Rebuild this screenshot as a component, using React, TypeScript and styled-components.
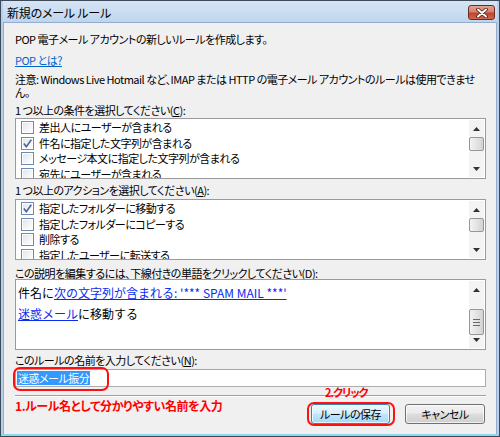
import React from "react";
import styled, { createGlobalStyle } from "styled-components";

const GlobalStyle = createGlobalStyle`
  html, body {
    margin: 0;
    padding: 0;
    background: #ffffff;
  }
  body {
    font-family: "Noto Sans CJK JP", "Noto Sans", sans-serif;
    font-size: 11px;
    letter-spacing: -0.5px;
    color: #000;
    font-feature-settings: "palt";
  }
`;

const conditions = [
  { label: "差出人にユーザーが含まれる", checked: false },
  { label: "件名に指定した文字列が含まれる", checked: true },
  { label: "メッセージ本文に指定した文字列が含まれる", checked: false },
  { label: "宛先にユーザーが含まれる", checked: false },
];

const actions = [
  { label: "指定したフォルダーに移動する", checked: true },
  { label: "指定したフォルダーにコピーする", checked: false },
  { label: "削除する", checked: false },
  { label: "指定したユーザーに転送する", checked: false },
];

function CheckBox({ checked }: { checked: boolean }) {
  return (
    <Box>
      {checked && (
        <svg width="11" height="11" viewBox="0 0 11 11">
          <path d="M1.8 5.6 L4.3 8.6 L9.3 1.8" fill="none" stroke="#4a6496" strokeWidth="1.6" />
        </svg>
      )}
    </Box>
  );
}

function ScrollBar({ thumbTop, thumbHeight, grip }: { thumbTop: number; thumbHeight: number; grip?: boolean }) {
  return (
    <Bar>
      <Arrow>
        <svg width="7" height="4" viewBox="0 0 7 4">
          <path d="M0 4 L3.5 0 L7 4 Z" fill="#333" />
        </svg>
      </Arrow>
      <Track>
        <Thumb $top={thumbTop} $height={thumbHeight}>
          {grip && (
            <svg width="7" height="7" viewBox="0 0 7 7">
              <path d="M0 0.5 H7 M0 3.5 H7 M0 6.5 H7" stroke="#6a6a6a" strokeWidth="1" />
            </svg>
          )}
        </Thumb>
      </Track>
      <Arrow>
        <svg width="7" height="4" viewBox="0 0 7 4">
          <path d="M0 0 L7 0 L3.5 4 Z" fill="#333" />
        </svg>
      </Arrow>
    </Bar>
  );
}

function CheckList({ items, gap }: { items: { label: string; checked: boolean }[]; gap: number }) {
  return (
    <ListBox $gap={gap}>
      <ListItems>
        {items.map((item, i) => (
          <Row key={i}>
            <CheckBox checked={item.checked} />
            <span>{item.label}</span>
          </Row>
        ))}
      </ListItems>
      <ScrollBar thumbTop={0} thumbHeight={14} />
    </ListBox>
  );
}

export default function App() {
  return (
    <>
      <GlobalStyle />
      <Window>
        <TitleBar>
          <Title>新規のメール ルール</Title>
          <CloseButton>
            <svg width="12" height="10" viewBox="0 0 12 10">
              <path d="M2 1.5 L10 8.5 M10 1.5 L2 8.5" stroke="#4a1a12" strokeWidth="3.6" strokeLinecap="round" />
              <path d="M2 1.5 L10 8.5 M10 1.5 L2 8.5" stroke="#ffffff" strokeWidth="2" strokeLinecap="round" />
            </svg>
          </CloseButton>
        </TitleBar>
        <Body>
          <Line>POP 電子メール アカウントの新しいルールを作成します。</Line>
          <HelpLink>POP とは?</HelpLink>
          <Note>
            注意: Windows Live Hotmail など、IMAP または HTTP の電子メール アカウントのルールは使用できませ
            <br />
            ん。
          </Note>
          <Label $gap={5}>
            1 つ以上の条件を選択してください(<u>C</u>):
          </Label>
          <CheckList items={conditions} gap={2} />
          <Label $gap={5}>
            1 つ以上のアクションを選択してください(<u>A</u>):
          </Label>
          <CheckList items={actions} gap={3} />
          <Label $gap={7}>
            この説明を編集するには、下線付きの単語をクリックしてください(<u>D</u>):
          </Label>
          <DescBox>
            <DescText>
              <DescLine>
                件名に<DescLink>次の文字列が含まれる: '*** SPAM MAIL ***'</DescLink>
              </DescLine>
              <DescLine>
                <DescLink>迷惑メール</DescLink>に移動する
              </DescLine>
            </DescText>
            <ScrollBar thumbTop={11} thumbHeight={26} grip />
          </DescBox>
          <Label $gap={4}>
            このルールの名前を入力してください(<u>N</u>):
          </Label>
          <NameField>
            <Selected>迷惑メール振分</Selected>
            <RedRing />
          </NameField>
          <Separator />
          <Footer>
            <Hint>1.ルール名として分かりやすい名前を入力</Hint>
            <Buttons>
              <ButtonWrap>
                <ClickHint>2.クリック</ClickHint>
                <Button $primary>ルールの保存</Button>
                <ButtonRing />
              </ButtonWrap>
              <Button>キャンセル</Button>
            </Buttons>
          </Footer>
        </Body>
      </Window>
    </>
  );
}

const Window = styled.div`
  width: 500px;
  height: 437px;
  box-sizing: border-box;
  display: flex;
  flex-direction: column;
  border: 1px solid #3c4a5a;
  background: #b8d0ea;
  padding: 0 2px 2px 2px;
  box-shadow: inset 0 -2px 0 #8fd6ee;
`;

const TitleBar = styled.div`
  height: 21px;
  display: flex;
  align-items: center;
  justify-content: space-between;
  padding: 0 2px 0 4px;
  background: linear-gradient(#d6e5f5, #bfd5ed);
`;

const Title = styled.div`
  font-size: 12px;
  letter-spacing: -0.2px;
  color: #000;
  line-height: 14px;
  padding-top: 2px;
`;

const CloseButton = styled.div`
  width: 27px;
  height: 15px;
  margin-top: 2px;
  box-sizing: border-box;
  display: flex;
  align-items: center;
  justify-content: center;
  border: 1px solid #6b2a22;
  border-radius: 3px;
  background: linear-gradient(#e6a393 0%, #d4806d 45%, #c2432c 55%, #d2664c 100%);
`;

const Body = styled.div`
  flex: 1;
  display: flex;
  flex-direction: column;
  background: #f0f0f0;
  border: 1px solid #94aed0;
  border-bottom: none;
  padding: 8px 10px 0 11px;
  overflow: hidden;
`;

const Line = styled.div`
  height: 16px;
  line-height: 16px;
  white-space: nowrap;
`;

const HelpLink = styled.a`
  align-self: flex-start;
  margin-top: 5px;
  height: 16px;
  line-height: 16px;
  color: #0066cc;
  text-decoration: underline;
`;

const Note = styled.div`
  margin-top: 5px;
  line-height: 13px;
  white-space: nowrap;
`;

const Label = styled.div<{ $gap: number }>`
  margin-top: ${(p) => p.$gap}px;
  height: 12px;
  line-height: 12px;
  white-space: nowrap;

  u {
    text-underline-offset: 1px;
  }
`;

const ListBox = styled.div<{ $gap: number }>`
  margin-top: ${(p) => p.$gap}px;
  height: 61px;
  flex-shrink: 0;
  box-sizing: border-box;
  display: flex;
  border: 1px solid #9a9a9a;
  background: #fff;
  overflow: hidden;
`;

const ListItems = styled.div`
  flex: 1;
  padding-top: 1px;
`;

const Row = styled.div`
  height: 15.5px;
  display: flex;
  align-items: center;
  gap: 5px;
  padding-left: 5px;
  white-space: nowrap;
  line-height: 15px;
`;

const Box = styled.div`
  width: 13px;
  height: 13px;
  box-sizing: border-box;
  flex-shrink: 0;
  display: flex;
  align-items: center;
  justify-content: center;
  border: 1px solid #7189ac;
  background: linear-gradient(135deg, #dfe4ea 0%, #f7f8fa 70%, #ffffff 100%);
  box-shadow: inset 0 0 0 1px #fff;
`;

const Bar = styled.div`
  width: 15px;
  margin: 1px 1px 1px 0;
  display: flex;
  flex-direction: column;
  background: #f3f3f3;
`;

const Arrow = styled.div`
  height: 17px;
  flex-shrink: 0;
  display: flex;
  align-items: center;
  justify-content: center;
`;

const Track = styled.div`
  flex: 1;
  min-height: 0;
`;

const Thumb = styled.div<{ $top: number; $height: number }>`
  margin-top: ${(p) => p.$top}px;
  height: ${(p) => p.$height}px;
  box-sizing: border-box;
  display: flex;
  align-items: center;
  justify-content: center;
  border: 1px solid #979797;
  border-radius: 2px;
  background: linear-gradient(90deg, #f2f2f2, #e4e4e4 50%, #d2d2d2);
`;

const DescBox = styled.div`
  height: 71px;
  flex-shrink: 0;
  box-sizing: border-box;
  display: flex;
  border: 1px solid #9a9a9a;
  background: #fff;
`;

const DescText = styled.div`
  flex: 1;
  padding: 5px 0 0 2px;
  font-size: 12px;
  letter-spacing: 0;
  font-feature-settings: normal;
`;

const DescLine = styled.div`
  height: 21px;
  line-height: 16px;
  white-space: nowrap;
`;

const DescLink = styled.a`
  color: #0a2cf0;
  text-decoration: underline;
`;

const NameField = styled.div`
  position: relative;
  margin-top: 3px;
  height: 18px;
  flex-shrink: 0;
  box-sizing: border-box;
  display: flex;
  align-items: center;
  padding-left: 1px;
  border: 1px solid #abadb3;
  border-top-color: #a0a8b8;
  background: #fff;
`;

const Selected = styled.span`
  background: #3399ff;
  color: #fff;
  line-height: 14px;
  padding: 0 1px;
`;

const RedRing = styled.div`
  position: absolute;
  left: -3px;
  top: -3px;
  width: 96px;
  height: 24px;
  box-sizing: border-box;
  border: 2px solid #ff1010;
  border-radius: 7px;
`;

const Separator = styled.div`
  margin-top: 8px;
  height: 1px;
  flex-shrink: 0;
  background: #a0a0a0;
  border-bottom: 1px solid #ffffff;
`;

const Footer = styled.div`
  display: flex;
  justify-content: space-between;
  align-items: flex-start;
`;

const Hint = styled.div`
  margin-top: 1px;
  color: #ff0000;
  font-weight: bold;
  font-size: 12px;
  letter-spacing: -0.4px;
  line-height: 16px;
  white-space: nowrap;
`;

const Buttons = styled.div`
  display: flex;
  gap: 15px;
  margin-top: 7px;
  padding-right: 1px;
`;

const ButtonWrap = styled.div`
  position: relative;
`;

const Button = styled.div<{ $primary?: boolean }>`
  width: ${(p) => (p.$primary ? 79 : 80)}px;
  height: 20px;
  box-sizing: border-box;
  display: flex;
  align-items: center;
  justify-content: center;
  border: 1px solid ${(p) => (p.$primary ? "#3c7fb1" : "#707070")};
  border-radius: 3px;
  background: ${(p) =>
    p.$primary
      ? "linear-gradient(#eaf6fd 0%, #d9f0fc 45%, #bee6fd 50%, #a7d9f5 100%)"
      : "linear-gradient(#f2f2f2 0%, #ebebeb 45%, #dddddd 50%, #cfcfcf 100%)"};
  box-shadow: inset 0 0 0 1px rgba(255, 255, 255, 0.7);
`;

const ClickHint = styled.div`
  position: absolute;
  left: 14px;
  top: -20px;
  color: #ff0000;
  font-weight: bold;
  font-size: 11px;
  letter-spacing: -1px;
  line-height: 16px;
  white-space: nowrap;
`;

const ButtonRing = styled.div`
  position: absolute;
  left: -4px;
  top: -2px;
  width: 88px;
  height: 24px;
  box-sizing: border-box;
  border: 2px solid #ff1010;
  border-radius: 7px;
`;
